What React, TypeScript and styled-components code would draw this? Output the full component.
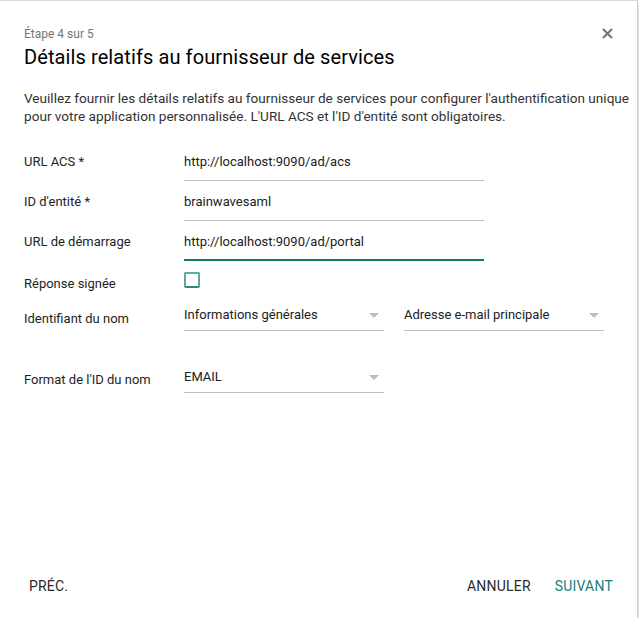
import { useState } from "react";
import styled, { createGlobalStyle } from "styled-components";

const GlobalStyle = createGlobalStyle`
  html, body {
    margin: 0;
    padding: 0;
    background: #ffffff;
  }
  body {
    font-family: Roboto, "Noto Sans", "Liberation Sans", sans-serif;
    color: #212121;
  }
`;

const Dialog = styled.div`
  position: relative;
  box-sizing: border-box;
  width: 638px;
  height: 618px;
  display: flex;
  flex-direction: column;
  background: #fff;
  border-top: 1px solid #dcdcdc;
  border-right: 1px solid #cfcfcf;
  box-shadow: 0 2px 3px rgba(0, 0, 0, 0.28);
`;

const Header = styled.div`
  padding: 26px 24px 0 24px;
`;

const Step = styled.div`
  font-size: 12px;
  line-height: 14px;
  color: #757575;
`;

const Title = styled.h1`
  margin: 3px 0 0 0;
  font-size: 20px;
  line-height: 26px;
  font-weight: 400;
  letter-spacing: 0.1px;
  color: #000;
`;

const CloseButton = styled.button`
  position: absolute;
  top: 22px;
  right: 20px;
  width: 20px;
  height: 20px;
  padding: 0;
  border: 0;
  background: transparent;
  display: flex;
  align-items: center;
  justify-content: center;
  cursor: pointer;
`;

const Body = styled.div`
  padding: 19px 4px 0 24px;
`;

const Description = styled.p`
  margin: 0;
  max-width: 610px;
  font-size: 13.6px;
  line-height: 18px;
  color: #333;
`;

const Form = styled.div`
  margin-top: 27px;
  display: flex;
  flex-direction: column;
`;

const Row = styled.div<{ $height: number }>`
  display: grid;
  grid-template-columns: 160px auto;
  align-items: start;
  height: ${(p) => p.$height}px;
`;

const Label = styled.div<{ $offset?: number }>`
  font-size: 13px;
  line-height: 20px;
  font-weight: 400;
  color: #1e1e1e;
  padding-top: ${(p) => p.$offset ?? 0}px;
`;

const Controls = styled.div`
  display: flex;
  gap: 20px;
`;

const TextField = styled.div<{ $focused?: boolean }>`
  box-sizing: border-box;
  width: 300px;
  height: 29px;
  font-size: 13px;
  line-height: 20px;
  color: #212121;
  border-bottom: ${(p) => (p.$focused ? "2px solid #0b7a66" : "1px solid #bdbdbd")};
`;

const Select = styled.div`
  position: relative;
  box-sizing: border-box;
  width: 200px;
  height: 26px;
  font-size: 13px;
  line-height: 20px;
  color: #212121;
  border-bottom: 1px solid #bdbdbd;
`;

const Arrow = styled.span`
  position: absolute;
  right: 5px;
  top: 8px;
  width: 0;
  height: 0;
  border-left: 5px solid transparent;
  border-right: 5px solid transparent;
  border-top: 5px solid #bdbdbd;
`;

const Checkbox = styled.button<{ $checked: boolean }>`
  box-sizing: border-box;
  width: 16px;
  height: 16px;
  padding: 0;
  border: 2px solid #5fa9a1;
  border-bottom-color: #2f8a80;
  border-radius: 2px;
  background: ${(p) => (p.$checked ? "#2f8a80" : "#fff")};
  cursor: pointer;
`;

const Footer = styled.div`
  margin-top: auto;
  display: flex;
  align-items: center;
  padding: 0 12px 14px 17px;
`;

const Spacer = styled.div`
  flex: 1;
`;

const TextButton = styled.button<{ $primary?: boolean }>`
  border: 0;
  background: transparent;
  padding: 0 12px;
  height: 36px;
  font-family: Roboto, "Liberation Sans", sans-serif;
  font-size: 14px;
  font-weight: 400;
  letter-spacing: 0.2px;
  text-transform: uppercase;
  color: ${(p) => (p.$primary ? "#16807a" : "#2a2a2a")};
  cursor: pointer;
`;

export default function App() {
  const [signed, setSigned] = useState(false);

  return (
    <>
      <GlobalStyle />
      <Dialog>
        <Header>
          <Step>Étape 4 sur 5</Step>
          <Title>Détails relatifs au fournisseur de services</Title>
        </Header>
        <CloseButton aria-label="Fermer">
          <svg width="11" height="11" viewBox="0 0 11 11">
            <path d="M1 1L10 10M10 1L1 10" stroke="#757575" strokeWidth="2" />
          </svg>
        </CloseButton>

        <Body>
          <Description>
            Veuillez fournir les détails relatifs au fournisseur de services pour configurer l'authentification unique
            pour votre application personnalisée. L'URL ACS et l'ID d'entité sont obligatoires.
          </Description>

          <Form>
            <Row $height={40}>
              <Label>URL ACS *</Label>
              <TextField>http://localhost:9090/ad/acs</TextField>
            </Row>
            <Row $height={40}>
              <Label>ID d'entité *</Label>
              <TextField>brainwavesaml</TextField>
            </Row>
            <Row $height={40}>
              <Label>URL de démarrage</Label>
              <TextField $focused>http://localhost:9090/ad/portal</TextField>
            </Row>
            <Row $height={33}>
              <Label $offset={2}>Réponse signée</Label>
              <Checkbox $checked={signed} onClick={() => setSigned(!signed)} />
            </Row>
            <Row $height={62}>
              <Label $offset={4}>Identifiant du nom</Label>
              <Controls>
                <Select>
                  Informations générales
                  <Arrow />
                </Select>
                <Select>
                  Adresse e-mail principale
                  <Arrow />
                </Select>
              </Controls>
            </Row>
            <Row $height={30}>
              <Label $offset={3}>Format de l'ID du nom</Label>
              <Select>
                EMAIL
                <Arrow />
              </Select>
            </Row>
          </Form>
        </Body>

        <Footer>
          <TextButton>Préc.</TextButton>
          <Spacer />
          <TextButton>Annuler</TextButton>
          <TextButton $primary>Suivant</TextButton>
        </Footer>
      </Dialog>
    </>
  );
}
